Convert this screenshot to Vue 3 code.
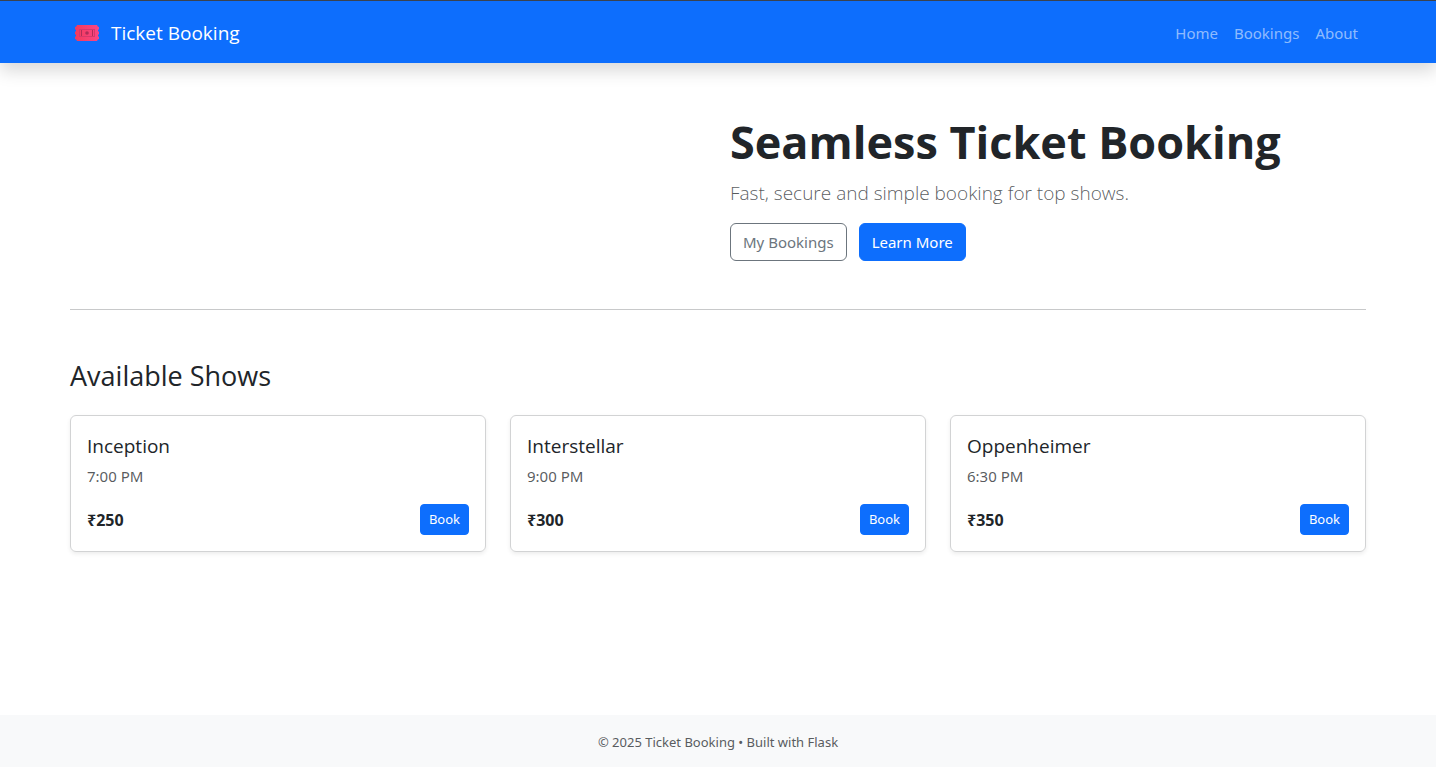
<script setup>
const links = ['Home', 'Bookings', 'About']
const shows = [
  { title: 'Inception', time: '7:00 PM', price: 250 },
  { title: 'Interstellar', time: '9:00 PM', price: 300 },
  { title: 'Oppenheimer', time: '6:30 PM', price: 350 },
]
</script>

<template>
  <div class="page">
    <header class="navbar">
      <div class="container bar">
        <a class="brand" href="#">
          <svg class="ticket" viewBox="0 0 32 24" aria-hidden="true">
            <defs>
              <linearGradient id="ticketFill" x1="0" y1="0" x2="1" y2="0">
                <stop offset="0" stop-color="#f23a5c" />
                <stop offset="1" stop-color="#fb4684" />
              </linearGradient>
            </defs>
            <path
              fill="url(#ticketFill)"
              d="M7 4H27Q27.500 6 29 6V8.500H28V10.500H29V13.500H28V15.500H29V18Q27.500 18 27 20H7Q6.500 18 5 18V15.500H6V13.500H5V10.500H6V8.500H5V6Q6.500 6 7 4Z"
            />
            <rect x="9.500" y="8.500" width="15" height="7" fill="none" stroke="#d8386a" />
            <path d="M11.500 9V15M22.500 9V15" fill="none" stroke="#b02d58" />
            <circle cx="17" cy="12" r="1.800" fill="#b02d58" />
          </svg>
          <span>Ticket Booking</span>
        </a>
        <nav class="nav">
          <a v-for="link in links" :key="link" href="#">{{ link }}</a>
        </nav>
      </div>
    </header>

    <main class="container main">
      <section class="hero">
        <div class="hero-text">
          <h1>Seamless Ticket Booking</h1>
          <p class="lead">Fast, secure and simple booking for top shows.</p>
          <div class="actions">
            <button type="button" class="btn outline">My Bookings</button>
            <button type="button" class="btn">Learn More</button>
          </div>
        </div>
      </section>
      <hr />
      <h2>Available Shows</h2>
      <section class="shows">
        <article v-for="show in shows" :key="show.title" class="card">
          <h3>{{ show.title }}</h3>
          <p class="time">{{ show.time }}</p>
          <div class="row">
            <strong>₹{{ show.price }}</strong>
            <button type="button" class="btn small">Book</button>
          </div>
        </article>
      </section>
    </main>

    <footer class="footer">© 2025 Ticket Booking • Built with Flask</footer>
  </div>
</template>

<style>
body {
  margin: 0;
  background: #fff;
}
</style>

<style scoped>
.page {
  display: flex;
  flex-direction: column;
  min-height: 100vh;
  box-sizing: border-box;
  color: #212529;
  font-family: "Noto Sans", "Open Sans", sans-serif;
  font-size: 15px;
  line-height: 24px;
}
.container {
  box-sizing: border-box;
  width: 100%;
  max-width: 1320px;
  margin: 0 auto;
  padding: 0 12px;
}
.navbar {
  padding-top: 2px;
  border-top: 1px solid #3a424e;
  background: #0d6efd;
  box-shadow: 0 8px 16px rgba(0, 0, 0, 0.15);
}
.bar {
  display: flex;
  align-items: center;
  justify-content: space-between;
  min-height: 60px;
}
.brand,
h1,
h2,
h3,
.lead {
  font-family: "Open Sans", "Noto Sans", sans-serif;
}
.brand {
  display: flex;
  align-items: center;
  gap: 9px;
  color: #fff;
  font-size: 19px;
  line-height: 30px;
  text-decoration: none;
}
.ticket {
  width: 32px;
  height: 24px;
}
.nav {
  display: flex;
}
.nav a {
  padding: 8px;
  color: rgba(255, 255, 255, 0.55);
  text-decoration: none;
}
.main {
  flex: 1;
}
.hero {
  display: grid;
  grid-template-columns: 1fr 1fr;
  gap: 24px;
  padding: 48px 0;
}
.hero-text {
  grid-column: 2;
}
h1 {
  margin: 0 0 4px;
  font-size: 45px;
  font-weight: 700;
  line-height: 62px;
}
.lead {
  margin: 0 0 14px;
  color: rgba(33, 37, 41, 0.75);
  font-size: 19px;
  font-weight: 300;
  line-height: 32px;
}
.actions {
  display: flex;
  gap: 12px;
}
.btn {
  padding: 6px 12px;
  border: 1px solid #0d6efd;
  border-radius: 6px;
  background: #0d6efd;
  color: #fff;
  font: inherit;
  cursor: pointer;
}
.btn.outline {
  border-color: #6c757d;
  background: transparent;
  color: #6c757d;
}
.btn.small {
  padding: 4px 8px;
  border-radius: 4px;
  font-size: 13px;
  line-height: 21px;
}
hr {
  margin: 0 0 48px;
  border: 0;
  border-top: 1px solid #c8c9ca;
}
h2 {
  margin: 0 0 21px;
  font-size: 27px;
  font-weight: 400;
  line-height: 36px;
}
.shows {
  display: grid;
  grid-template-columns: repeat(3, 1fr);
  gap: 24px;
}
.card {
  padding: 16px;
  border: 1px solid #d2d3d4;
  border-radius: 6px;
  box-shadow: 0 2px 4px rgba(0, 0, 0, 0.075);
}
h3 {
  margin: 0 0 4px;
  font-size: 19px;
  font-weight: 400;
  line-height: 28px;
}
.time {
  margin: 0 0 16px;
  color: rgba(33, 37, 41, 0.75);
}
.row {
  display: flex;
  align-items: center;
  justify-content: space-between;
}
.row strong {
  font-size: 16px;
}
.footer {
  padding: 17px 16px 15px;
  background: #f8f9fa;
  color: #595c5f;
  font-size: 13px;
  line-height: 20px;
  text-align: center;
}
</style>
